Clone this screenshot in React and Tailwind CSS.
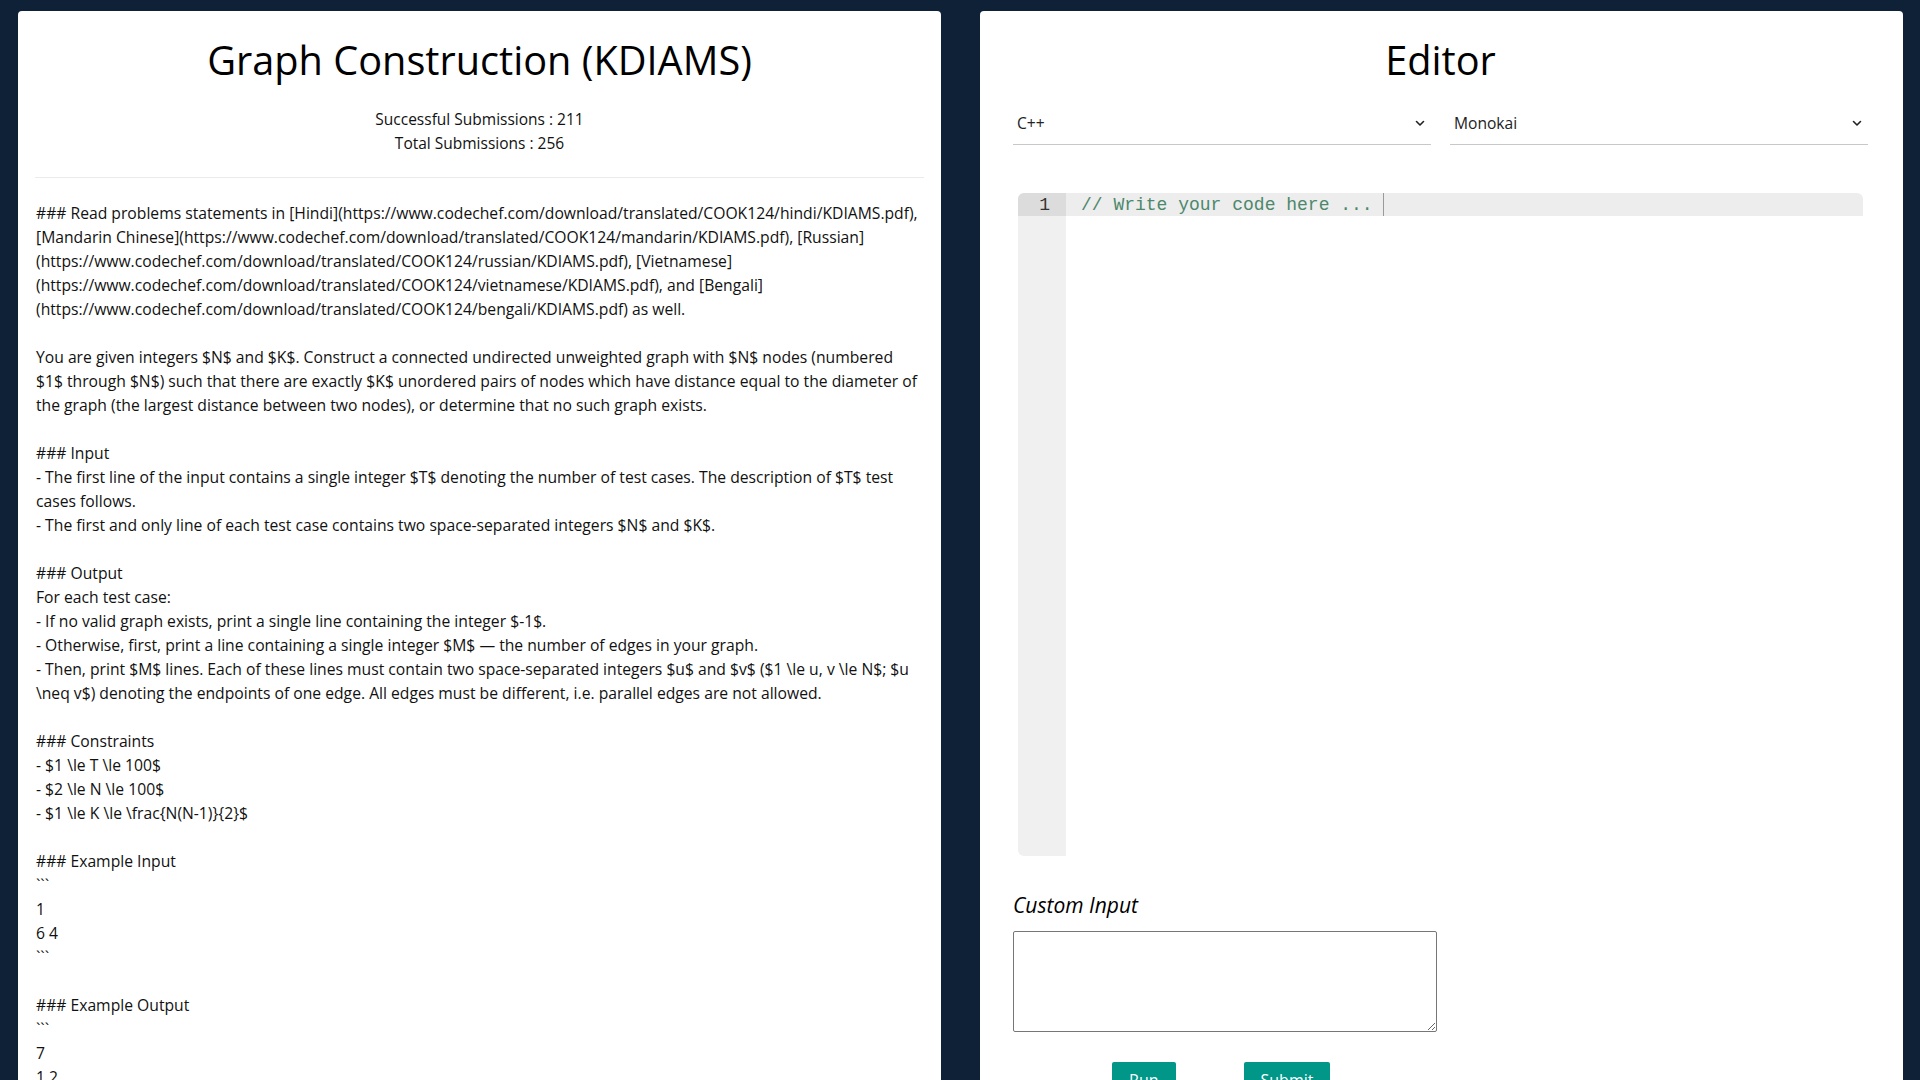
import React from "react";

const desc = [
  "### Read problems statements in [Hindi](https://www.codechef.com/download/translated/COOK124/hindi/KDIAMS.pdf),",
  "[Mandarin Chinese](https://www.codechef.com/download/translated/COOK124/mandarin/KDIAMS.pdf), [Russian]",
  "(https://www.codechef.com/download/translated/COOK124/russian/KDIAMS.pdf), [Vietnamese]",
  "(https://www.codechef.com/download/translated/COOK124/vietnamese/KDIAMS.pdf), and [Bengali]",
  "(https://www.codechef.com/download/translated/COOK124/bengali/KDIAMS.pdf) as well.",
  "",
  "You are given integers $N$ and $K$. Construct a connected undirected unweighted graph with $N$ nodes (numbered",
  "$1$ through $N$) such that there are exactly $K$ unordered pairs of nodes which have distance equal to the diameter of",
  "the graph (the largest distance between two nodes), or determine that no such graph exists.",
  "",
  "### Input",
  "- The first line of the input contains a single integer $T$ denoting the number of test cases. The description of $T$ test",
  "cases follows.",
  "- The first and only line of each test case contains two space-separated integers $N$ and $K$.",
  "",
  "### Output",
  "For each test case:",
  "- If no valid graph exists, print a single line containing the integer $-1$.",
  "- Otherwise, first, print a line containing a single integer $M$ \u2014 the number of edges in your graph.",
  "- Then, print $M$ lines. Each of these lines must contain two space-separated integers $u$ and $v$ ($1 \\le u, v \\le N$; $u",
  "\\neq v$) denoting the endpoints of one edge. All edges must be different, i.e. parallel edges are not allowed.",
  "",
  "### Constraints",
  "- $1 \\le T \\le 100$",
  "- $2 \\le N \\le 100$",
  "- $1 \\le K \\le \\frac{N(N-1)}{2}$",
  "",
  "### Example Input",
  "```",
  "1",
  "6 4",
  "```",
  "",
  "### Example Output",
  "```",
  "7",
  "1 2",
  "1 3",
  "1 4",
  "2 5",
  "2 6",
  "3 5",
  "4 6",
  "```",
].join("\n");

function Chevron() {
  return (
    <svg width="10" height="7" viewBox="0 0 10 7" fill="none" className="shrink-0">
      <path d="M1.5 1.5 L5 5 L8.5 1.5" stroke="#222" strokeWidth="1.6" strokeLinecap="round" strokeLinejoin="round" />
    </svg>
  );
}

function Select({ label }) {
  return (
    <div className="h-[42px] flex items-center justify-between pl-[4px] pr-[6px] border-b border-[#c8c8c8] text-[15.6px] text-[#222]">
      <span>{label}</span>
      <Chevron />
    </div>
  );
}

export default function App() {
  return (
    <div
      className="min-h-screen bg-[#0f2137] grid grid-cols-2 items-start gap-[39px] pl-[18px] pr-[17px] pt-[11px] pb-[40px]"
      style={{ fontFamily: "'Open Sans', sans-serif" }}
    >
      {/* Left panel */}
      <div className="min-w-0 bg-white rounded-[4px] px-[17px] pt-[25px] pb-[40px] text-[#111]">
        <h1 className="text-center text-[39.7px] leading-[48px] font-normal text-black">Graph Construction (KDIAMS)</h1>
        <div className="mt-[23px] text-center text-[15.5px] leading-[24px]">
          <div>Successful Submissions : 211</div>
          <div>Total Submissions : 256</div>
        </div>
        <div className="mt-[22px] h-px bg-[#ebebeb]" />
        <div className="mt-[23px] pl-[1px] text-[15.7px] leading-[24px] whitespace-pre overflow-hidden text-[#111]">{desc}</div>
      </div>

      {/* Right panel */}
      <div className="min-w-0 bg-white rounded-[4px] pl-[33px] pr-[35px] pt-[25px] pb-[60px] text-[#111]">
        <h1 className="text-center text-[39.7px] leading-[48px] font-normal text-black">Editor</h1>
        <div className="mt-[19px] grid grid-cols-2 gap-[19px]">
          <Select label="C++" />
          <Select label="Monokai" />
        </div>

        <div className="mt-[48px] mx-[5px] h-[663px] rounded-[6px] overflow-hidden flex bg-white">
          <div className="w-[48px] bg-[#f0f0f0] flex flex-col">
            <div
              className="h-[23px] bg-[#dcdcdc] text-right pr-[16px] text-[18px] leading-[24px] text-[#333]"
              style={{ fontFamily: "'Liberation Mono', monospace" }}
            >
              1
            </div>
          </div>
          <div className="flex-1 flex flex-col">
            <div
              className="h-[23px] bg-[#ededed] pl-[15px] text-[18px] leading-[24px] text-[#4c886b] whitespace-pre flex items-start"
              style={{ fontFamily: "'Liberation Mono', monospace" }}
            >
              <span>// Write your code here ... </span>
              <span className="w-px h-[23px] bg-[#9a9a9a]" />
            </div>
          </div>
        </div>

        <div className="mt-[35px] text-[21px] leading-[28px] italic text-black">Custom Input</div>
        <textarea className="mt-[12px] block w-[424px] h-[101px] border border-[#767676] rounded-[2px] bg-white" />

        <div className="mt-[30px] flex gap-[68px] pl-[99px]">
          <button className="h-[36px] px-[17px] bg-[#009688] text-white text-[16px] rounded-[2px]">Run</button>
          <button className="h-[36px] px-[17px] bg-[#009688] text-white text-[16px] rounded-[2px]">Submit</button>
        </div>
      </div>
    </div>
  );
}
